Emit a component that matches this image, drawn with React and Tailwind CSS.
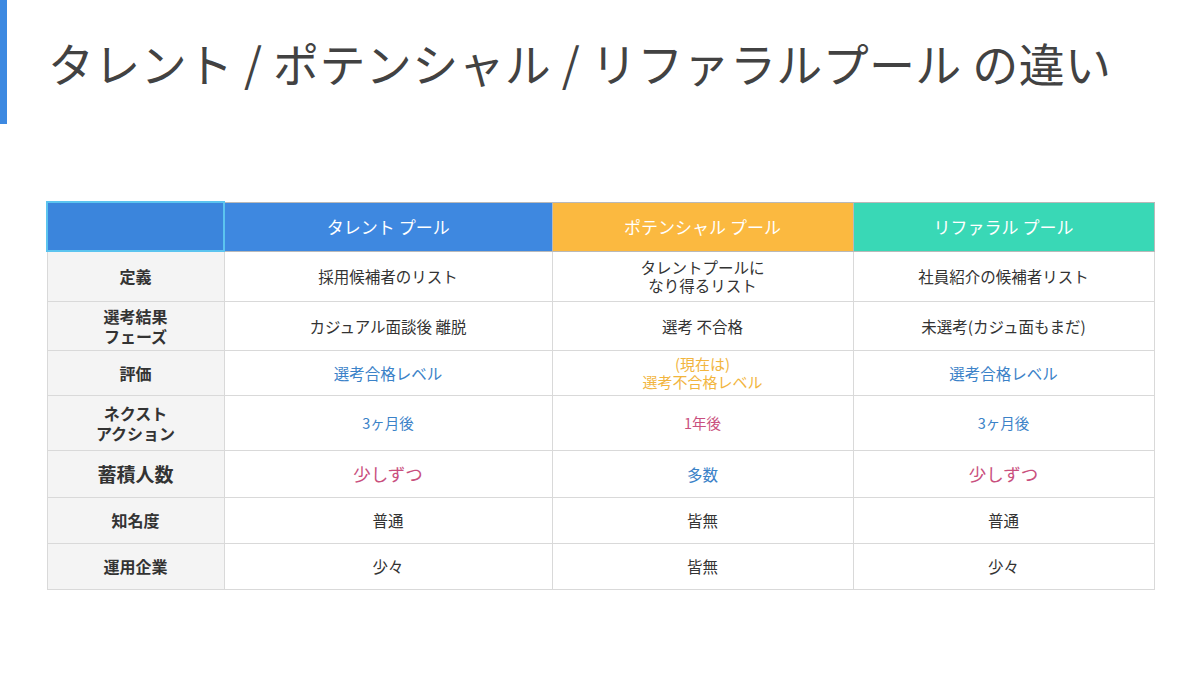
import React from "react";

const ROWS = [
  { label: ["定義"], h: "h-[50px]", cells: [
    { t: ["採用候補者のリスト"] },
    { t: ["タレントプールに", "なり得るリスト"] },
    { t: ["社員紹介の候補者リスト"] },
  ]},
  { label: ["選考結果", "フェーズ"], h: "h-[49px]", cells: [
    { t: ["カジュアル面談後 離脱"] },
    { t: ["選考 不合格"] },
    { t: ["未選考(カジュ面もまだ)"] },
  ]},
  { label: ["評価"], h: "h-[45px]", cells: [
    { t: ["選考合格レベル"], c: "text-[#3b82c8]" },
    { t: ["(現在は)", "選考不合格レベル"], c: "text-[#f2b53e] text-[15px] !leading-[18px]" },
    { t: ["選考合格レベル"], c: "text-[#3b82c8]" },
  ]},
  { label: ["ネクスト", "アクション"], h: "h-[55px]", cells: [
    { t: ["3ヶ月後"], c: "text-[#3b82c8] text-[14.5px]" },
    { t: ["1年後"], c: "text-[#c9507e] text-[14.5px]" },
    { t: ["3ヶ月後"], c: "text-[#3b82c8] text-[14.5px]" },
  ]},
  { label: ["蓄積人数"], big: true, h: "h-[47px]", cells: [
    { t: ["少しずつ"], c: "text-[#c9507e] text-[17.5px]" },
    { t: ["多数"], c: "text-[#3b82c8]" },
    { t: ["少しずつ"], c: "text-[#c9507e] text-[17.5px]" },
  ]},
  { label: ["知名度"], h: "h-[46px]", cells: [
    { t: ["普通"] }, { t: ["皆無"] }, { t: ["普通"] },
  ]},
  { label: ["運用企業"], h: "h-[46px]", cells: [
    { t: ["少々"] }, { t: ["皆無"] }, { t: ["少々"] },
  ]},
];

const HEADS = [
  { t: "タレント プール", bg: "bg-[#3e88e0]" },
  { t: "ポテンシャル プール", bg: "bg-[#fbb940]" },
  { t: "リファラル プール", bg: "bg-[#39d8b6]" },
];

function Lines({ lines }) {
  return lines.map((l, i) => <div key={i}>{l}</div>);
}

export default function App() {
  return (
    <div className="w-[1200px] h-[675px] bg-white flex flex-col" style={{ fontFamily: '"Noto Sans CJK JP", "Noto Sans", sans-serif' }}>
      <div className="flex h-[124px]">
        <div className="w-[7px] bg-[#3d89e1]" />
        <h1 className="pl-[41px] pt-[37px] text-[46px] leading-[50px] font-normal text-[#424242] tracking-[0.35px]">
          タレント / ポテンシャル / リファラルプール の違い
        </h1>
      </div>

      <div className="pl-[46px] pt-[77px]">
        <table className="table-fixed border-collapse w-[1107px] text-center text-[#333] text-[15.5px]">
          <colgroup>
            <col className="w-[177px]" />
            <col className="w-[328px]" />
            <col className="w-[301px]" />
            <col className="w-[301px]" />
          </colgroup>
          <thead>
            <tr className="h-[49px]">
              <th className="bg-[#3b85dc] border-2 border-[#5cc4ef]" />
              {HEADS.map((h) => (
                <th key={h.t} className={`${h.bg} border border-[#b9b9b9] text-white font-normal text-[17px]`}>
                  {h.t}
                </th>
              ))}
            </tr>
          </thead>
          <tbody>
            {ROWS.map((r, i) => (
              <tr key={i} className={r.h}>
                <td className={`bg-[#f4f4f4] border border-[#d9d9d9] font-bold text-[#333] leading-[20px] ${r.big ? "text-[19px]" : "text-[16px]"}`}>
                  <Lines lines={r.label} />
                </td>
                {r.cells.map((c, j) => (
                  <td key={j} className={`border border-[#d9d9d9] leading-[18px] ${c.c || ""}`}>
                    <Lines lines={c.t} />
                  </td>
                ))}
              </tr>
            ))}
          </tbody>
        </table>
      </div>
    </div>
  );
}
